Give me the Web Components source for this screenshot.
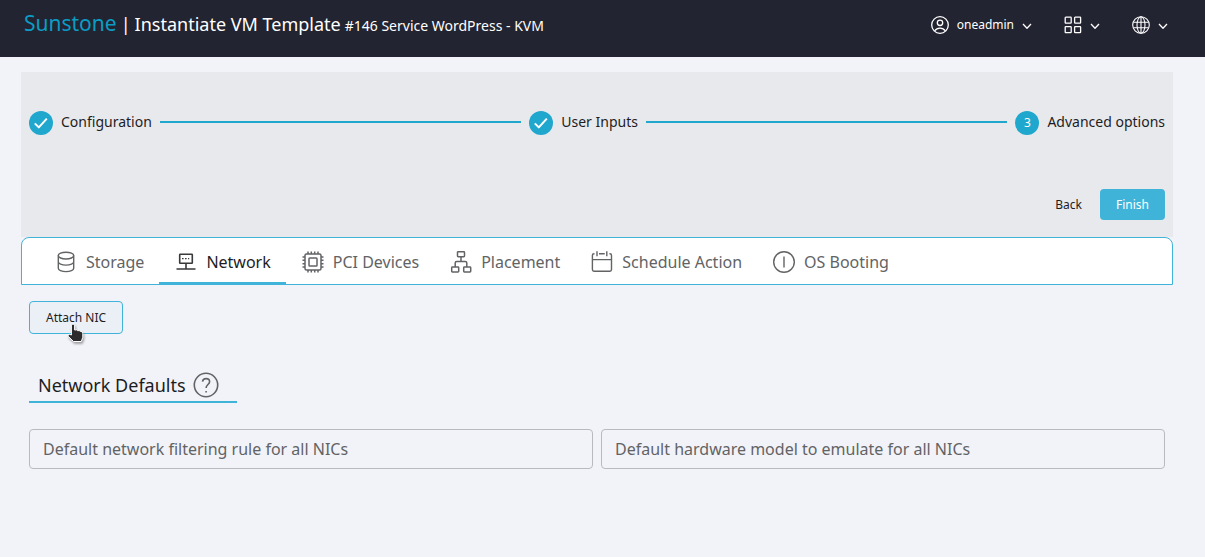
<!DOCTYPE html>
<html lang="en">
<head>
<meta charset="utf-8">
<meta name="viewport" content="width=device-width, initial-scale=1">
<title>Sunstone - Instantiate VM Template</title>
<style>
  :root {
    --dark: #222431;
    --page: #f2f3f8;
    --panel: #e8e9ed;
    --accent: #40b3d9;
    --step: #1fa7cd;
    --ink: #1d1d1f;
    --muted: #626365;
  }
  body {
    margin: 0;
    min-height: 100vh;
    background: var(--page);
    color: var(--ink);
    font-family: "Noto Sans", "Open Sans", sans-serif;
    font-size: 16px;
    line-height: 20px;
  }
</style>
</head>
<body>
<sun-app></sun-app>

<script>
const define = (name, html, init) => {
  const template = document.createElement('template');
  template.innerHTML = html;
  customElements.define(name, class extends HTMLElement {
    constructor() {
      super();
      this.attachShadow({ mode: 'open' }).append(template.content.cloneNode(true));
    }
    connectedCallback() { if (init) init.call(this, this.shadowRoot); }
  });
};

const ICONS = {
  user: [18, '<circle cx="9" cy="9" r="8.3"/><circle cx="9" cy="6.8" r="2.7"/><path d="M3.6 14.9C5 12.9 7 12.1 9 12.1s4 .8 5.4 2.8"/>', 1.3],
  apps: [18, '<rect x="1.2" y="1.2" width="6" height="6" rx=".6"/><rect x="10.6" y="1.2" width="6" height="6" rx=".6"/><rect x="1.2" y="10.6" width="6" height="6" rx=".6"/><rect x="10.6" y="10.6" width="6" height="6" rx=".6"/>', 1.3],
  globe: [18, '<circle cx="9" cy="9" r="8.3"/><ellipse cx="9" cy="9" rx="4" ry="8.3"/><path d="M9 .7v16.6M1.5 6.2h15M1.5 11.8h15"/>', 1.1],
  chevron: [10, '<path d="M1 4l4 4.2L9 4"/>', 1.3],
  check: [24, '<path d="M5.8 12.4l4 4 8-8.8"/>', 2],
  storage: [24, '<ellipse cx="12" cy="5.6" rx="7.7" ry="3.4"/><path d="M4.300 5.600v12.600c0 1.900 3.400 3.400 7.700 3.400s7.700-1.500 7.700-3.400V5.600M4.300 11.700c0 1.900 3.400 3.400 7.700 3.400s7.700-1.500 7.700-3.400"/>', 1.4],
  network: [24, '<rect x="5.700" y="4.300" width="12.600" height="9" rx=".5"/><path d="M12 13.500v5M2.500 19h19" /><path d="M8 8.700h1.600M11 8.700h1.600M14 8.700h1.200" stroke-width="1.200"/>', 1.6],
  chip: [24, '<rect x="4" y="4" width="16" height="16" rx="1.5"/><rect x="8" y="8" width="8" height="8" rx=".8"/><path d="M7 4V1.500M10.300 4V1.500M13.700 4V1.500M17 4V1.500M7 20v2.500M10.300 20v2.500M13.700 20v2.500M17 20v2.500M4 7H1.500M4 10.300H1.500M4 13.700H1.500M4 17H1.500M20 7h2.500M20 10.300h2.500M20 13.700h2.500M20 17h2.500"/>', 1.5],
  placement: [24, '<rect x="8.500" y="1.700" width="7" height="5" rx=".7"/><rect x="2.700" y="17" width="7" height="5" rx=".7"/><rect x="14.700" y="17" width="7" height="5" rx=".7"/><path d="M12 6.700v4.800M6.200 17v-4q0-1.500 1.500-1.500h8.600q1.500 0 1.500 1.500v4"/>', 1.5],
  calendar: [24, '<path d="M4.500 3.800H4q-1.600 0-1.600 1.600v14.200q0 1.600 1.600 1.600h15.900q1.600 0 1.600-1.600V5.400q0-1.600-1.600-1.600h-.5M9 3.800h5.700M2.400 9.600h19.100M7 1.200v5M16.800 1.200v5"/>', 1.4],
  boot: [24, '<circle cx="12" cy="12" r="10.300"/><path d="M12 6.500v11"/>', 1.4],
  help: [26, '<circle cx="13" cy="13" r="11.700"/><path d="M9.500 9.600q.4-3 3.600-3 3.500 0 3.500 3.100c0 2.700-3.500 3-3.500 6.200M13.100 19v1.600"/>', 1.6]
};

define('sun-icon', `
  <style>
    :host { display: block; flex: none; line-height: 0; }
    svg { display: block; fill: none; stroke: currentColor; stroke-linecap: butt; stroke-linejoin: round; }
  </style>
  <svg aria-hidden="true"></svg>`, function (root) {
  const [size, shapes, weight] = ICONS[this.getAttribute('name')];
  const svg = root.querySelector('svg');
  svg.setAttribute('viewBox', `0 0 ${size} ${size}`);
  svg.setAttribute('width', size);
  svg.setAttribute('height', size);
  svg.setAttribute('stroke-width', weight);
  svg.innerHTML = shapes;
});

define('header-menu', `
  <style>
    :host { display: block; }
    button { display: flex; align-items: center; gap: 8px; padding: 8px; border: 0; background: none; color: #fff; font: inherit; font-size: 12px; line-height: 16px; cursor: pointer; }
  </style>
  <button type="button" aria-haspopup="menu"><slot></slot><sun-icon name="chevron"></sun-icon></button>`, function (root) {
  const label = this.getAttribute('label');
  if (label) root.querySelector('button').setAttribute('aria-label', label);
});

define('sun-header', `
  <style>
    :host { display: block; background: var(--dark); color: #fff; }
    header { display: flex; align-items: center; justify-content: space-between; min-height: 49px; padding: 0 29px 8px 24px; }
    .titles { display: flex; align-items: baseline; gap: 4px; padding-bottom: 4px; white-space: nowrap; }
    a { color: #0b9cc5; font-size: 21px; line-height: 28px; text-decoration: none; }
    h1 { margin: 0; font-size: 18px; line-height: 24px; font-weight: 400; }
    .bar { font-size: 18px; }
    .sub { font-size: 14px; }
    nav { display: flex; align-items: center; gap: 16px; }
  </style>
  <header>
    <div class="titles">
      <a href="#">Sunstone</a><span class="bar">|</span>
      <h1>Instantiate VM Template</h1>
      <span class="sub">#146 Service WordPress - KVM</span>
    </div>
    <nav aria-label="Account">
      <header-menu><sun-icon name="user"></sun-icon><span>oneadmin</span></header-menu>
      <header-menu label="Zones"><sun-icon name="apps"></sun-icon></header-menu>
      <header-menu label="Language"><sun-icon name="globe"></sun-icon></header-menu>
    </nav>
  </header>`);

define('sun-step', `
  <style>
    :host { display: flex; align-items: center; gap: 8px; font-size: 14px; white-space: nowrap; }
    .dot { display: grid; place-items: center; width: 24px; height: 24px; border-radius: 50%; background: var(--step); color: #fff; font-size: 12px; }
    .label { padding-bottom: 2px; }
  </style>
  <span class="dot"></span><span class="label"><slot></slot></span>`, function (root) {
  const dot = root.querySelector('.dot');
  if (this.hasAttribute('done')) dot.innerHTML = '<sun-icon name="check"></sun-icon>';
  else dot.textContent = this.getAttribute('number');
});

define('sun-button', `
  <style>
    :host { display: inline-block; }
    button { display: block; padding: 8px 16px; border: 0; border-radius: 4px; background: none; color: var(--ink); font: inherit; font-size: 12px; line-height: 15px; white-space: nowrap; cursor: pointer; }
    :host([kind="primary"]) button { background: var(--accent); color: #fff; }
    :host([kind="outlined"]) button { border: 1px solid var(--accent); background: #ebf0f7; }
  </style>
  <button type="button"><slot></slot></button>`);

define('sun-stepper', `
  <style>
    :host { display: block; padding: 39px 8px 17px; background: var(--panel); }
    .steps { display: flex; align-items: center; gap: 8px; }
    .line { flex: 1; height: 2px; margin-bottom: 2px; background: var(--step); }
    .actions { display: flex; justify-content: flex-end; gap: 2px; margin-top: 54px; }
  </style>
  <div class="steps">
    <sun-step done>Configuration</sun-step>
    <span class="line"></span>
    <sun-step done>User Inputs</sun-step>
    <span class="line"></span>
    <sun-step number="3">Advanced options</sun-step>
  </div>
  <div class="actions">
    <sun-button>Back</sun-button>
    <sun-button kind="primary">Finish</sun-button>
  </div>`);

define('sun-tab', `
  <style>
    :host { display: block; }
    button { display: flex; align-items: center; gap: 8px; height: 100%; padding: 13px 15px 9px; border: 0; border-bottom: 2px solid transparent; background: none; color: var(--muted); font: inherit; white-space: nowrap; cursor: pointer; }
    :host([selected]) button { border-color: var(--accent); color: var(--ink); }
    :host([selected]) .icon { color: #38393b; }
  </style>
  <button type="button" role="tab"><span class="icon"></span><slot></slot></button>`, function (root) {
  root.querySelector('.icon').innerHTML = `<sun-icon name="${this.getAttribute('icon')}"></sun-icon>`;
  root.querySelector('button').setAttribute('aria-selected', this.hasAttribute('selected'));
});

define('sun-tabs', `
  <style>
    :host { display: flex; height: 46px; padding: 0 17px; border: 1px solid var(--accent); border-radius: 8px 8px 0 0; background: #fff; }
  </style>
  <slot></slot>`, function () { this.setAttribute('role', 'tablist'); });

define('hand-pointer', `
  <style>
    :host { position: absolute; left: 38px; top: 22px; pointer-events: none; }
    svg { display: block; filter: drop-shadow(1px 2px 1px #0005); }
  </style>
  <svg width="18" height="21" viewBox="0 0 18 21" aria-hidden="true"><path d="M4.400 12V2.800Q4.400 1 6 1t1.600 1.800V7q2.500-.6 3.100.7 1.800-.5 2.500.6 2.600-.3 2.600 2.300v3.600l-1.500 4.300H6.500L1.200 13.300Q.300 11.400 2.200 11.200z" fill="#2c2c2e" stroke="#fff" stroke-linejoin="round"/></svg>`);

define('sun-field', `
  <style>
    :host { display: block; flex: 1; min-width: 0; }
    input { display: block; box-sizing: border-box; width: 100%; height: 40px; padding: 0 13px; border: 1px solid #b9babf; border-radius: 4px; background: none; color: var(--ink); font: inherit; }
    input::placeholder { color: var(--muted); opacity: 1; }
  </style>
  <input type="text">`, function (root) {
  const input = root.querySelector('input');
  input.placeholder = this.getAttribute('label');
  input.setAttribute('aria-label', this.getAttribute('label'));
});

define('network-panel', `
  <style>
    :host { display: block; padding: 16px 8px; }
    .attach { position: relative; width: max-content; }
    .heading { display: flex; align-items: center; gap: 7px; width: max-content; margin-top: 38px; padding: 0 18px 3px 9px; border-bottom: 2px solid var(--accent); }
    h2 { margin: 0; font-size: 18px; line-height: 24px; font-weight: 400; }
    .help { padding: 0; border: 0; background: none; color: var(--muted); cursor: pointer; }
    .fields { display: flex; gap: 8px; margin-top: 26px; }
  </style>
  <div class="attach"><sun-button kind="outlined">Attach NIC</sun-button><hand-pointer></hand-pointer></div>
  <div class="heading"><h2>Network Defaults</h2><button class="help" type="button" aria-label="Help"><sun-icon name="help"></sun-icon></button></div>
  <div class="fields">
    <sun-field label="Default network filtering rule for all NICs"></sun-field>
    <sun-field label="Default hardware model to emulate for all NICs"></sun-field>
  </div>`);

define('sun-app', `
  <style>
    :host { display: block; }
    main { padding: 15px 32px 0 21px; }
  </style>
  <sun-header></sun-header>
  <main>
    <sun-stepper></sun-stepper>
    <sun-tabs>
      <sun-tab icon="storage">Storage</sun-tab>
      <sun-tab icon="network" selected>Network</sun-tab>
      <sun-tab icon="chip">PCI Devices</sun-tab>
      <sun-tab icon="placement">Placement</sun-tab>
      <sun-tab icon="calendar">Schedule Action</sun-tab>
      <sun-tab icon="boot">OS Booting</sun-tab>
    </sun-tabs>
    <network-panel></network-panel>
  </main>`);
</script>
</body>
</html>
